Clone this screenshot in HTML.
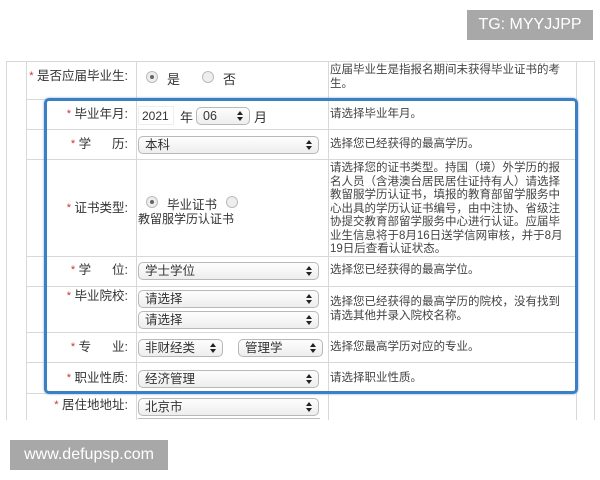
<!DOCTYPE html><html><head><meta charset="utf-8"><style>
body{margin:0;width:600px;height:480px;background:#fff;position:relative;overflow:hidden;font-family:"Liberation Sans","Noto Sans CJK SC",sans-serif;font-size:12px;color:#333}
.a{position:absolute}
.h{position:absolute;height:1px;background:#d8d8d8}
.v{position:absolute;width:1px;background:#d8d8d8}
.sel{position:absolute;height:16px;border:1px solid #b8b8b8;border-radius:5px;background:linear-gradient(#fdfdfd,#eeeeee);font-size:12.5px;line-height:16px;padding-left:6px;box-sizing:content-box}
.sel:after{content:"";position:absolute;right:6px;top:3px;width:0;height:0;border-left:3px solid transparent;border-right:3px solid transparent;border-bottom:4px solid #222}
.sel:before{content:"";position:absolute;right:6px;top:9px;width:0;height:0;border-left:3px solid transparent;border-right:3px solid transparent;border-top:4px solid #222}
.lab{position:absolute;text-align:right;white-space:nowrap;font-size:12.5px;line-height:15px}
.lab b{color:#c33;font-weight:normal;font-size:11px;position:relative;top:-1px}
.d{position:absolute;left:330px;width:236px;line-height:13.5px;font-size:11.5px;color:#444}
.r{position:absolute;width:10px;height:10px;border-radius:50%;border:1px solid #bbb;background:#eee}
.r.on:after{content:"";position:absolute;left:3px;top:3px;width:4px;height:4px;border-radius:50%;background:#666}
</style></head><body>
<div class="a" style="left:467px;top:10px;width:126px;height:30px;background:#a8a8a8;color:#fff;font-size:16px;line-height:30px;text-align:center">TG: MYYJJPP</div>

<div class="v" style="left:6px;top:61px;height:359px"></div>
<div class="v" style="left:594px;top:61px;height:359px"></div>
<div class="v" style="left:26px;top:61px;height:359px"></div>
<div class="v" style="left:136px;top:61px;height:359px"></div>
<div class="v" style="left:328px;top:61px;height:359px"></div>
<div class="v" style="left:576px;top:61px;height:359px"></div>
<div class="h" style="left:6px;top:61px;width:589px"></div>
<div class="h" style="left:26px;top:99px;width:551px"></div>
<div class="h" style="left:26px;top:129px;width:551px"></div>
<div class="h" style="left:26px;top:159px;width:551px"></div>
<div class="h" style="left:26px;top:256px;width:551px"></div>
<div class="h" style="left:26px;top:286px;width:551px"></div>
<div class="h" style="left:26px;top:332px;width:551px"></div>
<div class="h" style="left:26px;top:362px;width:551px"></div>
<div class="h" style="left:26px;top:393px;width:551px"></div>

<div class="lab" style="left:28px;top:69px;width:100px"><b>*</b> 是否应届毕业生:</div>
<div class="r on" style="left:146px;top:71px"></div><div class="a" style="left:167px;top:69px;font-size:13px">是</div>
<div class="r" style="left:202px;top:71px"></div><div class="a" style="left:223px;top:69px;font-size:13px">否</div>
<div class="d" style="top:64px">应届毕业生是指报名期间未获得毕业证书的考生。</div>

<div class="lab" style="left:40px;top:107px;width:88px"><b>*</b> 毕业年月:</div>
<div class="a" style="left:138px;top:106px;width:36px;height:19px;border:1px solid #eee;line-height:19px;padding-left:3px;box-sizing:border-box">2021</div>
<div class="a" style="left:180px;top:107px;font-size:13px">年</div>
<div class="sel" style="left:196px;top:107px;width:46px">06</div>
<div class="a" style="left:254px;top:107px;font-size:13px">月</div>
<div class="d" style="top:108px">请选择毕业年月。</div>

<div class="lab" style="left:40px;top:137px;width:88px"><b>*</b> 学&nbsp;&nbsp;&nbsp;&nbsp;&nbsp;&nbsp;历:</div>
<div class="sel" style="left:138px;top:136px;width:173px">本科</div>
<div class="d" style="top:138px">选择您已经获得的最高学历。</div>

<div class="lab" style="left:40px;top:201px;width:88px"><b>*</b> 证书类型:</div>
<div class="r on" style="left:146px;top:196px"></div><div class="a" style="left:167px;top:194px;font-size:12.5px">毕业证书</div>
<div class="r" style="left:226px;top:196px"></div>
<div class="a" style="left:138px;top:210px;font-size:12px">教留服学历认证书</div>
<div class="d" style="top:162px">请选择您的证书类型。持国（境）外学历的报名人员（含港澳台居民居住证持有人）请选择教留服学历认证书，填报的教育部留学服务中心出具的学历认证书编号，由中注协、省级注协提交教育部留学服务中心进行认证。应届毕业生信息将于8月16日送学信网审核，并于8月19日后查看认证状态。</div>

<div class="lab" style="left:40px;top:263px;width:88px"><b>*</b> 学&nbsp;&nbsp;&nbsp;&nbsp;&nbsp;&nbsp;位:</div>
<div class="sel" style="left:138px;top:262px;width:173px">学士学位</div>
<div class="d" style="top:264px">选择您已经获得的最高学位。</div>

<div class="lab" style="left:40px;top:289px;width:88px"><b>*</b> 毕业院校:</div>
<div class="sel" style="left:138px;top:290px;width:173px">请选择</div>
<div class="sel" style="left:138px;top:311px;width:173px">请选择</div>
<div class="d" style="top:296px">选择您已经获得的最高学历的院校，没有找到请选其他并录入院校名称。</div>

<div class="lab" style="left:40px;top:340px;width:88px"><b>*</b> 专&nbsp;&nbsp;&nbsp;&nbsp;&nbsp;&nbsp;业:</div>
<div class="sel" style="left:138px;top:339px;width:77px">非财经类</div>
<div class="sel" style="left:238px;top:339px;width:77px">管理学</div>
<div class="d" style="top:341px">选择您最高学历对应的专业。</div>

<div class="lab" style="left:40px;top:371px;width:88px"><b>*</b> 职业性质:</div>
<div class="sel" style="left:138px;top:370px;width:173px">经济管理</div>
<div class="d" style="top:372px">请选择职业性质。</div>

<div class="lab" style="left:30px;top:398px;width:98px"><b>*</b> 居住地地址:</div>
<div class="sel" style="left:138px;top:398px;width:173px">北京市</div>
<div class="a" style="left:138px;top:418px;width:182px;height:2px;border-top:1px solid #bbb"></div>
<div class="a" style="left:0;top:420px;width:600px;height:60px;background:#fff"></div>

<div class="a" style="left:44px;top:98px;width:528px;height:290px;border:3px solid #3b80c3;border-radius:5px;box-shadow:0 0 2px #7aa8d8"></div>

<div class="a" style="left:10px;top:440px;width:158px;height:30px;background:#a8a8a8;color:#fff;font-size:16px;line-height:30px;text-align:center">www.defupsp.com</div>
</body></html>
